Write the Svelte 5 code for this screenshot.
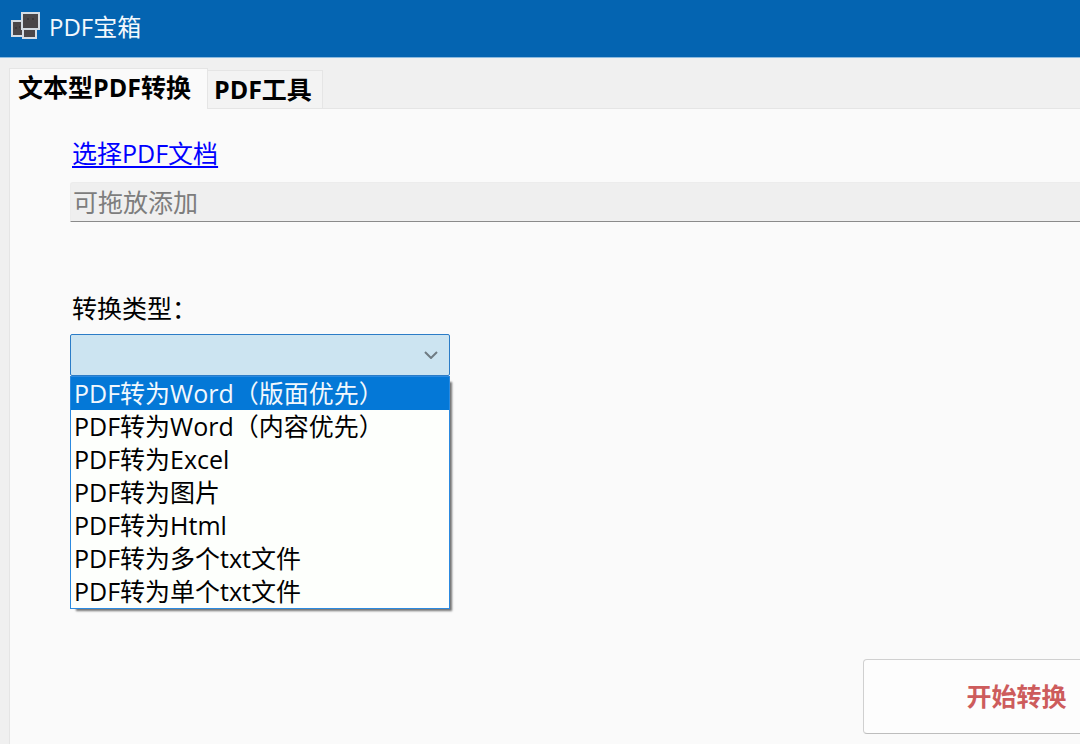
<script>
	const tabs = ['文本型PDF转换', 'PDF工具'];
	const types = [
		'PDF转为Word（版面优先）',
		'PDF转为Word（内容优先）',
		'PDF转为Excel',
		'PDF转为图片',
		'PDF转为Html',
		'PDF转为多个txt文件',
		'PDF转为单个txt文件'
	];

	let tab = 0;
	let path = '';
	let selected = '';
	let active = 0;
	let open = true;

	// The list below replaces the native popup
	function toggle(e) {
		e.preventDefault();
		open = !open;
	}

	function choose(type) {
		selected = type;
		open = false;
	}

	function onKeyDown(e) {
		if (e.key === 'Escape') open = false;
	}
</script>

<svelte:window on:keydown={onKeyDown} />

<div class="window">
	<header>
		<svg class="logo" viewBox="0 0 30 28" aria-hidden="true">
			<g fill="#4a4749" stroke="#d5dde4" stroke-width="2">
				<rect x="1" y="9" width="12" height="15" />
				<rect x="12" y="17" width="13" height="9" />
				<rect x="11" y="1" width="17" height="16" />
			</g>
			<path d="M4 16h2M8 15h1M16 7h2M21 7h2" stroke="#2c2a2c" />
		</svg>
		<h1>PDF宝箱</h1>
	</header>

	<div class="tabs" role="tablist">
		{#each tabs as name, i}
			<button
				class="tab"
				class:current={tab === i}
				role="tab"
				aria-selected={tab === i}
				on:click={() => (tab = i)}
			>
				{name}
			</button>
		{/each}
	</div>

	<main>
		<a href="#file" class="pick">选择PDF文档</a>
		<input id="file" type="text" placeholder="可拖放添加" aria-label="选择PDF文档" bind:value={path} />

		<label for="type">转换类型：</label>
		<div class="combo">
			<select id="type" bind:value={selected} on:mousedown={toggle}>
				<option value=""></option>
				{#each types as type}
					<option value={type}>{type}</option>
				{/each}
			</select>
			<svg class="arrow" viewBox="0 0 14 8" aria-hidden="true">
				<path d="M1 1 L7 7 L13 1" fill="none" stroke="#6f7b83" stroke-width="2" />
			</svg>

			{#if open}
				<div class="list" role="listbox" aria-label="转换类型">
					{#each types as type, i}
						<button
							role="option"
							aria-selected={active === i}
							class:active={active === i}
							on:mouseenter={() => (active = i)}
							on:click={() => choose(type)}
						>
							{type}
						</button>
					{/each}
				</div>
			{/if}
		</div>

		<div class="actions">
			<button class="start">开始转换</button>
		</div>
	</main>
</div>

<style>
	:global(body) {
		margin: 0;
	}

	.window {
		display: flex;
		flex-direction: column;
		box-sizing: border-box;
		min-height: 100vh;
		overflow: hidden;
		background: #f0f0f0;
		color: #000;
		font: 25px/33px 'Open Sans', 'Noto Sans CJK SC', sans-serif;
	}

	button,
	input,
	select {
		box-sizing: border-box;
		margin: 0;
		font: inherit;
		color: inherit;
	}

	header {
		display: flex;
		align-items: center;
		gap: 8px;
		height: 58px;
		padding: 0 11px 5px;
		box-sizing: border-box;
		border-bottom: 1px solid #8dbbe0;
		background: #0464b1;
		color: #f4f9fd;
	}

	.logo {
		width: 30px;
		height: 28px;
	}

	h1 {
		margin: 0;
		font-size: 24px;
		font-weight: 400;
	}

	.tabs {
		display: flex;
		align-items: flex-end;
		padding: 10px 0 0 9px;
	}

	.tab {
		height: 38px;
		padding: 0 10px 0 6px;
		border: 1px solid #e5e5e5;
		border-left: none;
		border-bottom: none;
		background: #f3f3f3;
		font-weight: 700;
		white-space: nowrap;
	}

	.tab.current {
		position: relative;
		height: 41px;
		margin-bottom: -1px;
		padding: 0 16px 3px 8px;
		border-left: 1px solid #e5e5e5;
		background: #fafafa;
	}

	main {
		display: flex;
		flex: 1;
		flex-direction: column;
		align-items: flex-start;
		margin-left: 9px;
		padding: 28px 0 10px 60px;
		border-top: 1px solid #e5e5e5;
		border-left: 1px solid #e5e5e5;
		background: #fafafa;
	}

	.pick {
		margin-left: 2px;
		color: #00f;
		text-underline-offset: 3px;
		text-decoration-thickness: 2px;
	}

	input {
		width: 100%;
		height: 40px;
		margin-top: 12px;
		padding: 0 2px;
		border: 1px solid #ececec;
		border-right: none;
		border-bottom-color: #8a8a8a;
		border-radius: 3px 0 0 0;
		background: #efefef;
		outline: none;
	}

	input::placeholder {
		color: #7d7d7d;
		opacity: 1;
	}

	label {
		margin: 70px 0 9px 2px;
	}

	.combo {
		position: relative;
		width: 380px;
	}

	select {
		display: block;
		width: 100%;
		height: 42px;
		padding: 0 32px 0 4px;
		border: 1px solid #2b7cc7;
		border-radius: 2px;
		background: #cce4f1;
		appearance: none;
		outline: none;
	}

	.arrow {
		position: absolute;
		top: 17px;
		right: 12px;
		width: 14px;
		height: 8px;
		pointer-events: none;
	}

	.list {
		position: absolute;
		top: 100%;
		left: 0;
		right: 0;
		z-index: 10;
		border: 1px solid #2b8ae0;
		background: #fdfffc;
		box-shadow: 4px 4px 2px -2px rgba(0, 0, 0, 0.55);
	}

	.list button {
		display: block;
		width: 100%;
		height: 33px;
		padding: 0 3px;
		border: none;
		background: none;
		text-align: left;
		white-space: nowrap;
	}

	.list button.active {
		background: #0478d7;
		color: #f2f8fd;
	}

	.actions {
		align-self: flex-end;
		margin: 283px -90px 0 0;
	}

	.start {
		width: 307px;
		height: 75px;
		border: 1px solid #d0d0d0;
		border-bottom-color: #bdbdbd;
		border-radius: 4px;
		background: #fdfdfd;
		color: #cd5c5c;
		font-weight: 700;
	}
</style>
